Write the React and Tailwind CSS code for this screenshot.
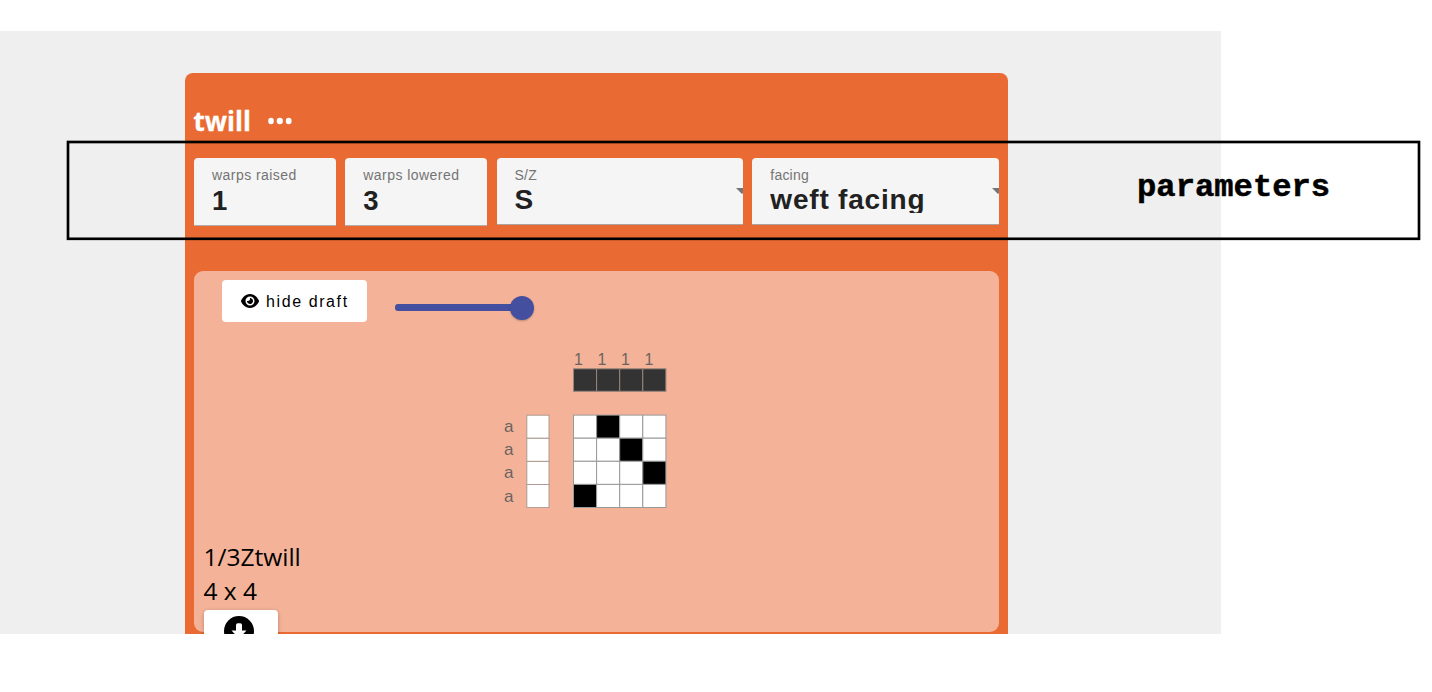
import React from "react";

const draft = [
  [0, 1, 0, 0],
  [0, 0, 1, 0],
  [0, 0, 0, 1],
  [1, 0, 0, 0],
];

function NumberField({ label, value }) {
  return (
    <div className="flex h-[68px] w-[141.7px] shrink-0 flex-col rounded-t-[4px] border-b border-[#b5aca8] bg-[#f5f5f5] pl-[18px] pt-[8px]">
      <span className="whitespace-nowrap text-[14px] leading-[18px] tracking-[0.45px] text-[#747474]">{label}</span>
      <span className="text-[27.5px] font-bold leading-[34px] text-[#212121]">{value}</span>
    </div>
  );
}

function SelectField({ label, value }) {
  return (
    <div className="flex h-[67px] w-[246.2px] shrink-0 overflow-hidden rounded-t-[4px] border-b border-[#a9a4a2] bg-[#f5f5f5] pl-[18px] pt-[8px]">
      <div className="flex flex-1 flex-col">
        <span className="text-[14px] leading-[18px] tracking-[0.2px] text-[#747474]">{label}</span>
        <span className="h-[29px] overflow-hidden whitespace-nowrap text-[28px] font-bold leading-[31px] tracking-[0.8px] text-[#212121]">
          {value}
        </span>
      </div>
      <svg className="mt-[22px] h-[6px] w-[7px] shrink-0" viewBox="0 0 7 6">
        <path d="M0 0H12L6 6Z" fill="#757575" />
      </svg>
    </div>
  );
}

function Dots() {
  return (
    <svg className="h-[8px] w-[24px]" viewBox="0 0 24 8">
      <ellipse cx="3" cy="4" rx="2.8" ry="3.2" fill="#fff" />
      <ellipse cx="11.8" cy="4" rx="3.1" ry="3.2" fill="#fff" />
      <ellipse cx="20.7" cy="4" rx="2.9" ry="3.2" fill="#fff" />
    </svg>
  );
}

function Parameters() {
  return (
    <div className="flex items-start gap-[9.6px]">
      <NumberField label="warps raised" value="1" />
      <NumberField label="warps lowered" value="3" />
      <SelectField label="S/Z" value="S" />
      <SelectField label="facing" value="weft facing" />
    </div>
  );
}

function Toolbar() {
  return (
    <div className="flex pl-7 pt-[9px]">
      <button className="flex h-[42px] w-[145px] items-center rounded-[4px] bg-white pl-[18.5px]">
        <svg className="h-[16px] w-[18px]" viewBox="0 0 576 512">
          <path d="M288 32c-80.800 0-145.500 36.800-192.600 80.600C48.600 156 17.300 208 2.500 243.700c-3.300 7.900-3.300 16.700 0 24.600C17.300 304 48.600 356 95.400 399.400C142.500 443.200 207.200 480 288 480s145.500-36.800 192.600-80.600c46.800-43.500 78.100-95.400 93-131.100c3.300-7.900 3.300-16.700 0-24.600c-14.900-35.700-46.200-87.700-93-131.100C433.500 68.800 368.800 32 288 32zM144 256a144 144 0 1 1 288 0a144 144 0 1 1-288 0zm144-64c0 35.300-28.700 64-64 64c-7.100 0-13.900-1.200-20.300-3.300c-5.500-1.800-11.900 1.600-11.700 7.400c.3 6.900 1.300 13.800 3.200 20.700c13.700 51.200 66.400 81.600 117.600 67.900s81.600-66.400 67.900-117.600c-11.100-41.500-47.800-69.400-88.600-71.100c-5.800-.2-9.200 6.100-7.400 11.700c2.100 6.400 3.300 13.200 3.300 20.300z" />
        </svg>
        <span className="ml-[7.500px] mt-[2px] whitespace-nowrap text-[16px] leading-5 tracking-[1.600px] text-black">hide draft</span>
      </button>
      <div className="ml-7 mt-[16px] flex h-[24px] items-center">
        <div className="h-[7px] w-[118px] rounded-l-[3px] bg-[#444f9f]" />
        <div className="-ml-[3px] size-[24px] rounded-full bg-[#444f9f] shadow-[0_1px_2px_rgba(0,0,0,0.25)]" />
      </div>
    </div>
  );
}

function Drawdown() {
  return (
    <div className="ml-[309px] mt-[28px] grid w-[164px] grid-cols-[70px_94px] text-[#6b6361]">
      <div />
      <div className="grid grid-cols-4 text-[16px] leading-[18px]">
        {[1, 1, 1, 1].map((n, i) => (
          <span key={i} className="-mb-px pl-[1px] pt-px">{n}</span>
        ))}
      </div>
      <div />
      <svg className="h-[24px] w-[94px]" viewBox="0 0 94 24">
        {[0, 1, 2, 3].map((i) => (
          <rect key={i} x={0.5 + i * 23.1} y="0.8" width="23.1" height="22.5" fill="#333" stroke="#96857c" />
        ))}
      </svg>
      <div className="mt-[22px] flex">
        <div className="flex w-[23px] flex-col pt-px">
          {["a", "a", "a", "a"].map((n, i) => (
            <span key={i} className="h-[23.200px] pl-[1px] text-[17px] leading-[23px]">{n}</span>
          ))}
        </div>
        <svg className="h-[94px] w-[24px]" viewBox="0 0 24 94">
          {[0, 1, 2, 3].map((i) => (
            <rect key={i} x="0.8" y={1.2 + i * 23.1} width="22.2" height="23.1" fill="#fff" stroke="#b09a91" />
          ))}
        </svg>
      </div>
      <svg className="mt-[22px] h-[94px] w-[94px]" viewBox="0 0 94 94">
        {draft.map((row, y) =>
          row.map((on, x) => (
            <rect
              key={`${x}-${y}`}
              x={0.5 + x * 23.1}
              y={1.1 + y * 23.1}
              width="23.1"
              height="23.1"
              fill={on ? "#000" : "#fff"}
              stroke="#999"
            />
          ))
        )}
      </svg>
    </div>
  );
}

export default function App() {
  return (
    <div className="relative h-[692px] w-[1432px] overflow-hidden bg-white pt-[31px] font-['Liberation_Sans',sans-serif]">
      <div className="h-[603px] w-[1221px] overflow-hidden bg-[#efefef] pl-[185px] pt-[42.400px]">
        <div className="h-[580px] w-[822.500px] rounded-t-[8px] bg-[#e96b33] px-[9px] pt-[28.600px]">
          <div className="flex h-[38px] items-center font-['Open_Sans',sans-serif]">
            <h1 className="-ml-[0.5px] w-[57px] whitespace-nowrap text-[26px] font-bold leading-[38px] text-white [-webkit-text-stroke:0.3px_#fff]">
              twill
            </h1>
            <div className="ml-[17px] flex">
              <Dots />
            </div>
          </div>
          <div className="mt-[18px]">
            <Parameters />
          </div>
          <div className="mt-[45px] h-[361px] w-[804.500px] rounded-[9px] bg-[#f4b398]">
            <Toolbar />
            <Drawdown />
            <div className="ml-[9.500px] mt-[32px] font-['Open_Sans',sans-serif] text-[24.500px] leading-[34px] text-black">
              <p>1/3Ztwill</p>
              <p>4 x 4</p>
            </div>
            <button className="ml-[9.500px] mt-[2px] flex h-[42px] w-[74.500px] justify-center rounded-[4px] bg-white pt-[6px] shadow-[0_1px_4px_rgba(0,0,0,0.25)]">
              <svg className="-ml-[3px] h-[30px] w-[30px]" viewBox="0 0 30 30">
                <circle cx="15" cy="15" r="15" />
                <path d="M12 9a1.800 1.800 0 0 1 1.800-1.800h2.400a1.800 1.800 0 0 1 1.800 1.800V14.500h4.500L15 22.500L7.500 14.500h4.500Z" fill="#fff" />
              </svg>
            </button>
          </div>
        </div>
      </div>
      <div className="absolute left-[66px] top-[140px] h-[101px] w-[1355px]">
        <svg className="absolute inset-0 h-[101px] w-[1355px]" viewBox="0 0 1355 101">
          <rect x="2" y="2" width="1351" height="96.800" fill="none" stroke="#000" strokeWidth="2.670" />
        </svg>
        <span className="absolute left-[1071px] top-[28px] font-['Liberation_Mono',monospace] text-[32.200px] font-bold leading-[40px] text-black [-webkit-text-stroke:0.5px_#000]">
          parameters
        </span>
      </div>
    </div>
  );
}
